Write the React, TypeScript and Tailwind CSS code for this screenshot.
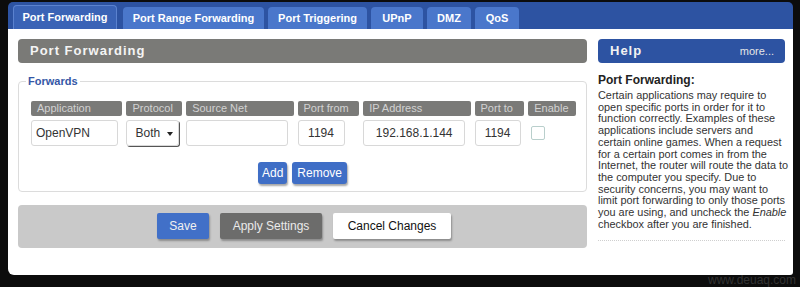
import React from "react";

const font = { fontFamily: '"Liberation Sans", Arial, sans-serif' };

const tabs = [
  { label: "Port Forwarding", w: "w-[104px]", active: true },
  { label: "Port Range Forwarding", w: "w-[141px]" },
  { label: "Port Triggering", w: "w-[99px]" },
  { label: "UPnP", w: "w-[52px]" },
  { label: "DMZ", w: "w-[44px]" },
  { label: "QoS", w: "w-[44px]" },
];

const cols = [
  { label: "Application", w: "w-[92px]" },
  { label: "Protocol", w: "w-[56px]" },
  { label: "Source Net", w: "w-[108px]" },
  { label: "Port from", w: "w-[62px]" },
  { label: "IP Address", w: "w-[108px]" },
  { label: "Port to", w: "w-[50px]" },
  { label: "Enable", w: "w-[48px]" },
];

export default function App() {
  return (
    <div
      className="relative w-[800px] h-[287px] overflow-hidden bg-[#0c0c0c] pl-[8px] pr-[7px] pt-[2px]"
      style={font}
    >
      {/* Tab bar */}
      <div className="h-[27px] rounded-t-[5px] bg-[#2d53a2] flex items-end gap-[4px] pl-[5px]">
        {tabs.map((t) => (
          <div
            key={t.label}
            className={
              t.active
                ? `${t.w} h-[24px] mr-[2px] rounded-t-[4px] bg-[#3a63b6] border border-b-0 border-[#5b82cf] text-white text-[11px] font-bold flex items-center justify-center pb-[1px]`
                : `${t.w} h-[22px] rounded-t-[4px] bg-[#4a77cb] text-white text-[11px] font-bold flex items-center justify-center`
            }
          >
            {t.label}
          </div>
        ))}
      </div>

      {/* White panel */}
      <div className="h-[246px] bg-white rounded-bl-[6px] rounded-br-[3px] pl-[10px] pr-[8px] pt-[10px] flex gap-[11px]">
        {/* Left column */}
        <div className="w-[569px] flex flex-col">
          <div className="h-[24px] rounded-[4px] bg-[#7a7a77] flex items-center pl-[12px] text-[13px] font-bold tracking-[1px] text-[#f4f4f4]">
            Port Forwarding
          </div>

          <fieldset className="mt-[11px] border border-[#dcdcdc] rounded-[4px] pl-[12px] pr-[10px] pt-[13px] pb-[7px] m-0 min-w-0">
            <legend className="ml-[-5px] px-[2px] text-[11px] font-bold text-[#3557a6] leading-[14px]">
              Forwards
            </legend>
            <div className="flex gap-[4px]">
              {cols.map((c) => (
                <div
                  key={c.label}
                  className={`${c.w} h-[15px] rounded-[2px] bg-[#7a7a78] text-[#d2d2d2] text-[11px] leading-[15px] pl-[6px]`}
                >
                  {c.label}
                </div>
              ))}
            </div>
            <div className="flex items-start gap-[4px] mt-[4px] text-[12px] text-[#333]">
              <div className="w-[92px]">
                <div className="w-[87px] h-[26px] border border-[#d8d8d8] rounded-[3px] flex items-center pl-[4px]">
                  OpenVPN
                </div>
              </div>
              <div className="w-[56px]">
                <div className="relative w-[53px] h-[26px] border border-[#d8d8d8] rounded-[3px] flex items-center pl-[8px] shadow-[1px_1px_0_#555]">
                  Both
                  <span className="absolute right-[5px] top-[11px] w-0 h-0 border-l-[3px] border-r-[3px] border-t-[4px] border-l-transparent border-r-transparent border-t-[#222]" />
                </div>
              </div>
              <div className="w-[108px]">
                <div className="w-[102px] h-[26px] border border-[#d8d8d8] rounded-[3px]" />
              </div>
              <div className="w-[62px]">
                <div className="w-[47px] h-[26px] border border-[#d8d8d8] rounded-[3px] flex items-center justify-center">
                  1194
                </div>
              </div>
              <div className="w-[108px]">
                <div className="w-[102px] h-[26px] border border-[#d8d8d8] rounded-[3px] flex items-center justify-center">
                  192.168.1.144
                </div>
              </div>
              <div className="w-[50px]">
                <div className="w-[46px] h-[26px] border border-[#d8d8d8] rounded-[3px] flex items-center justify-center">
                  1194
                </div>
              </div>
              <div className="w-[48px] h-[26px] flex items-center pl-[3px]">
                <div className="w-[14px] h-[14px] border border-[#b9cfcc] rounded-[2px]" />
              </div>
            </div>
            <div className="flex justify-center gap-[5px] mt-[16px] pr-[2px]">
              <div className="h-[22px] px-[4px] rounded-[3px] bg-[#3f6ec6] text-white text-[12px] flex items-center shadow-[1px_2px_2px_rgba(0,0,0,0.35)]">
                Add
              </div>
              <div className="h-[22px] px-[5px] rounded-[3px] bg-[#3f6ec6] text-white text-[12px] flex items-center shadow-[1px_2px_2px_rgba(0,0,0,0.35)]">
                Remove
              </div>
            </div>
          </fieldset>

          <div className="mt-[13px] h-[43px] rounded-[4px] bg-[#c9c9c9] flex items-center justify-center gap-[11px] pl-[3px] pb-[2px]">
            <div className="w-[52px] h-[26px] rounded-[2px] bg-[#4170c8] text-[#f0f0f0] text-[12px] flex items-center justify-center shadow-[1px_2px_2px_rgba(0,0,0,0.3)]">
              Save
            </div>
            <div className="w-[102px] h-[26px] rounded-[2px] bg-[#6c6c6b] text-[#eaeaea] text-[12px] flex items-center justify-center shadow-[1px_2px_2px_rgba(0,0,0,0.3)]">
              Apply Settings
            </div>
            <div className="w-[118px] h-[26px] rounded-[2px] bg-white text-[#111] text-[12px] flex items-center justify-center shadow-[1px_2px_2px_rgba(0,0,0,0.3)]">
              Cancel Changes
            </div>
          </div>
        </div>

        {/* Right column */}
        <div className="w-[189px] flex flex-col">
          <div className="w-[187px] h-[24px] rounded-[4px] bg-[#2d53a2] flex items-center justify-between pl-[12px] pr-[11px]">
            <span className="text-[13px] font-bold tracking-[1px] text-[#f2f2f2]">Help</span>
            <span className="text-[11px] text-[#e6e6e6]">more...</span>
          </div>
          <div className="mt-[10px] text-[12px] font-bold text-[#222] leading-[14px]">
            Port Forwarding:
          </div>
          <p className="mt-[3px] text-[10.9px] leading-[11.7px] text-[#333] whitespace-nowrap">
            Certain applications may require to<br />
            open specific ports in order for it to<br />
            function correctly. Examples of these<br />
            applications include servers and<br />
            certain online games. When a request<br />
            for a certain port comes in from the<br />
            Internet, the router will route the data to<br />
            the computer you specify. Due to<br />
            security concerns, you may want to<br />
            limit port forwarding to only those ports<br />
            you are using, and uncheck the <i>Enable</i><br />
            checkbox after you are finished.
          </p>
          <div className="mt-[10px] w-[187px] border-t border-dotted border-[#cfcfcf]" />
        </div>
      </div>

      <div className="absolute left-[708px] top-[274px] text-[12px] text-[#333] leading-[12px]">
        www.deuaq.com
      </div>
    </div>
  );
}
